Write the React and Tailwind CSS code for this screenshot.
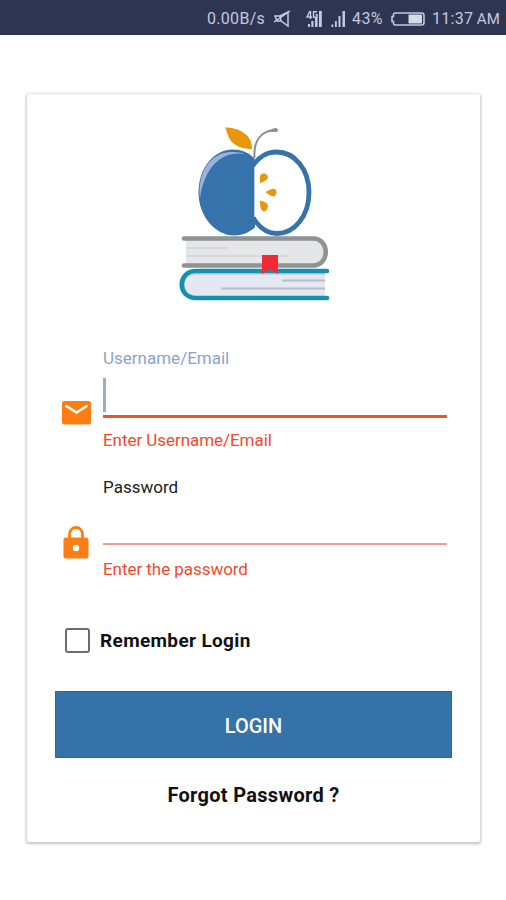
import React from 'react';

function StatusBar() {
  return (
    <header className="flex h-[35px] items-center bg-[#2e3553] pl-[207px] pt-[3px] text-[16px] leading-none text-[#c3c9de]">
      <span className="w-[66px] whitespace-nowrap tracking-[0.3px]">0.00B/s</span>
      <svg className="h-[20px] w-[18px] shrink-0" viewBox="273 8 18 20" fill="none" stroke="#c3c9de" strokeWidth="1.5">
        <path d="M275 15h5l8-4v14l-7-5h-4zM274 21l16-11M280 15l1 5" />
      </svg>
      <svg className="ml-[14px] h-[20px] w-[18px] shrink-0" viewBox="305 8 18 20" fill="#c3c9de">
        <path d="M319 10h2.8v16H319zM315 17h2.6v9H315zM311.3 20h2.2v6h-2.2zM308 23h2v3h-2z" />
        <path d="M310 10l-3 6h5M310.5 10v8M317 10.800h-3.500v5.500h3.500v-2.500h-1.500" fill="none" stroke="#c3c9de" strokeWidth="1.4" />
      </svg>
      <svg className="ml-[7px] h-[20px] w-[17px] shrink-0" viewBox="330 8 17 20" fill="#c3c9de">
        <path d="M342.500 10h2.500v16h-2.500zM338.500 15h2v11h-2zM335 20h1.800v6H335zM331.500 23.500h1.800V26h-1.800z" />
      </svg>
      <span className="ml-[5px] w-[38px] whitespace-nowrap tracking-[0.4px]">43%</span>
      <svg className="h-[18px] w-[36px] shrink-0" viewBox="390 9 36 18">
        <path d="M395 12h26.500q2.500 0 2.500 2.500v7q0 2.500-2.500 2.500H395q-1.500 0-1.500-2v-1.500h-1.500v-5h1.500V14q0-2 1.500-2z" fill="none" stroke="#c3c9de" strokeWidth="1.600" />
        <path d="M408.500 13.500H421q1 0 1 1v7q0 1-1 1h-12.500z" fill="#d5d9e8" />
      </svg>
      <span className="ml-[6px] whitespace-nowrap tracking-[0.3px]">11:37 <span className="-ml-[1px] text-[15px]">AM</span></span>
    </header>
  );
}

function Logo() {
  return (
    <svg className="ml-[143px] h-[190px] w-[170px] shrink-0" viewBox="170 120 170 190">
      {/* leaf and stem */}
      <path d="M225 127.500c7-.5 17 2.500 22 8c4 4 5 9 5 13.500c-8 0-15-2-20-7c-4-4-4.500-10-7-14.500z" fill="#e8960c" />
      <path d="M254.500 158c-1-16 5-27 20-27.500" fill="none" stroke="#8b8f92" strokeWidth="2" />
      <path d="M266 131l9-3q3 0 3 2t-3 2z" fill="#8b8f92" />
      {/* apple halves */}
      <path d="M254.500 158.500c-6-6-13-9-21.500-9c-19 0-34.500 18-34.500 43c0 24 17 43 35.500 43c8 0 15-3 21-8z" fill="#3673ab" />
      <path d="M245 154c-23-4-41 13-45 45c-3-26 10-47 32-47c5 0 9 .5 13 2z" fill="#9db2da" />
      <path d="M254.500 164.500c6-8 13-12.500 22-12.500c18 0 32 17 32 40.500c0 24-15 40.500-31 40.500c-10 0-17-5-23-14z" fill="#fff" />
      <path d="M252 167c6-10 15.500-15 24.500-15c18 0 32.500 17 32.500 40.500c0 24-15 41-32 41c-10 0-18-6-24-16" fill="none" stroke="#3673ab" strokeWidth="4.800" />
      <path d="M254.500 167v50" stroke="#b8cbe4" strokeWidth="1" />
      <g fill="#e8960c">
        <path d="M260 183v-6q0-3 3-3.500c3-.5 5 2 5 4.500c-2 2-4 4-8 5z" />
        <path d="M265.500 192c4-2 7-4 9.500-3c2 2 2 5 0 7c-3 1-6-1-9.500-4z" />
        <path d="M260 200.500c4 1 7 2 8 5c0 3-2 6-4 6c-3-1-4-4-4-11z" />
      </g>
      {/* upper book */}
      <path d="M186 239h128c17 0 17 26 0 26H186z" fill="#e5e6e8" />
      <path d="M187 248h41M187 256h101" stroke="#d3d4d7" strokeWidth="1.500" />
      <path d="M184 238.500h129c17 0 17 27 0 27H184" fill="none" stroke="#8f9392" strokeWidth="4.600" strokeLinecap="round" />
      {/* lower book */}
      <path d="M325 271H197c-20 0-20 27 0 27h128z" fill="#e5e8f3" />
      <path d="M187 293c-7-10-1-19 10-19h128" fill="none" stroke="#c7c9d4" strokeWidth="1.500" />
      <path d="M282 280.500h43M221 288.500h104" stroke="#b9bbc6" strokeWidth="1.800" />
      <path d="M327 271H196c-19 0-19 27 0 27h131" fill="none" stroke="#1491ac" strokeWidth="4.600" strokeLinecap="round" />
      <path d="M262 255h16v19l-8-4.500l-8 4.500z" fill="#f12935" />
    </svg>
  );
}

export default function App() {
  return (
    <div className="h-[900px] w-[506px] overflow-hidden bg-white font-['Roboto','Liberation_Sans',sans-serif]">
      <StatusBar />
      <main className="ml-[27px] mt-[59px] flex h-[748px] w-[453px] flex-col rounded-[2px] bg-white pt-[26px] shadow-[0_1px_3px_1px_rgba(0,0,0,0.24)]">
        <Logo />

        <section className="ml-[35px] mt-[38px] flex h-[105px]">
          <svg className="mt-[53px] h-[24px] w-[29px] shrink-0" viewBox="0 0 29 24">
            <rect width="29" height="23.500" rx="2.500" fill="#fc7e13" />
            <path d="M3.500 4.500l11 7l11-7" fill="none" stroke="#fff" strokeWidth="2.400" />
          </svg>
          <div className="ml-[12px] flex w-[344px] flex-col">
            <label className="h-[20px] whitespace-nowrap text-[17px] leading-[20px] text-[#8ca3cb]">Username/Email</label>
            <div className="mt-[10px] h-[40px] border-b-[3px] border-[#eb5528]">
              <div className="h-[34px] w-[3px] bg-[#98acd1]" />
            </div>
            <p className="mt-[12px] h-[20px] whitespace-nowrap text-[17px] leading-[20px] tracking-[-0.05px] text-[#f1492c]">Enter Username/Email</p>
          </div>
        </section>

        <section className="ml-[35px] mt-[24px] flex h-[106px]">
          <svg className="ml-[1px] mt-[49px] h-[33px] w-[27px] shrink-0" viewBox="0 0 27 33">
            <rect x=".5" y="11.500" width="25" height="21" rx="2.500" fill="#fa7e15" />
            <path d="M6.500 12V8a6.500 6.500 0 0 1 13 0v4" fill="none" stroke="#fa7e15" strokeWidth="2.800" />
            <circle cx="13" cy="22" r="3.200" fill="#fff" />
          </svg>
          <div className="ml-[13px] flex w-[344px] flex-col">
            <label className="h-[20px] whitespace-nowrap text-[17px] leading-[20px] text-[#202020]">Password</label>
            <div className="mt-[10px] h-[38px] border-b-2 border-[#f39b91]" />
            <p className="mt-[14px] h-[20px] whitespace-nowrap text-[17px] leading-[20px] tracking-[-0.05px] text-[#f1492c]">Enter the password</p>
          </div>
        </section>

        <div className="ml-[38px] mt-[44px] flex h-[26px] items-center">
          <span className="size-[25px] rounded-[3px] border-[2px] border-[#6d6d6d]" />
          <span className="ml-[10px] whitespace-nowrap pt-[1px] text-[19px] font-bold leading-[24px] tracking-[0.35px] text-[#111]">Remember Login</span>
        </div>

        <button className="ml-[28px] mt-[38px] h-[67px] w-[397px] shrink-0 border border-[#2468a8] bg-[#3572a9] pt-[2px] text-[20px] font-medium text-white">LOGIN</button>
        <a className="mt-[25px] text-center text-[20px] font-bold leading-[24px] tracking-[0.3px] text-[#111]">Forgot Password ?</a>
      </main>
    </div>
  );
}
